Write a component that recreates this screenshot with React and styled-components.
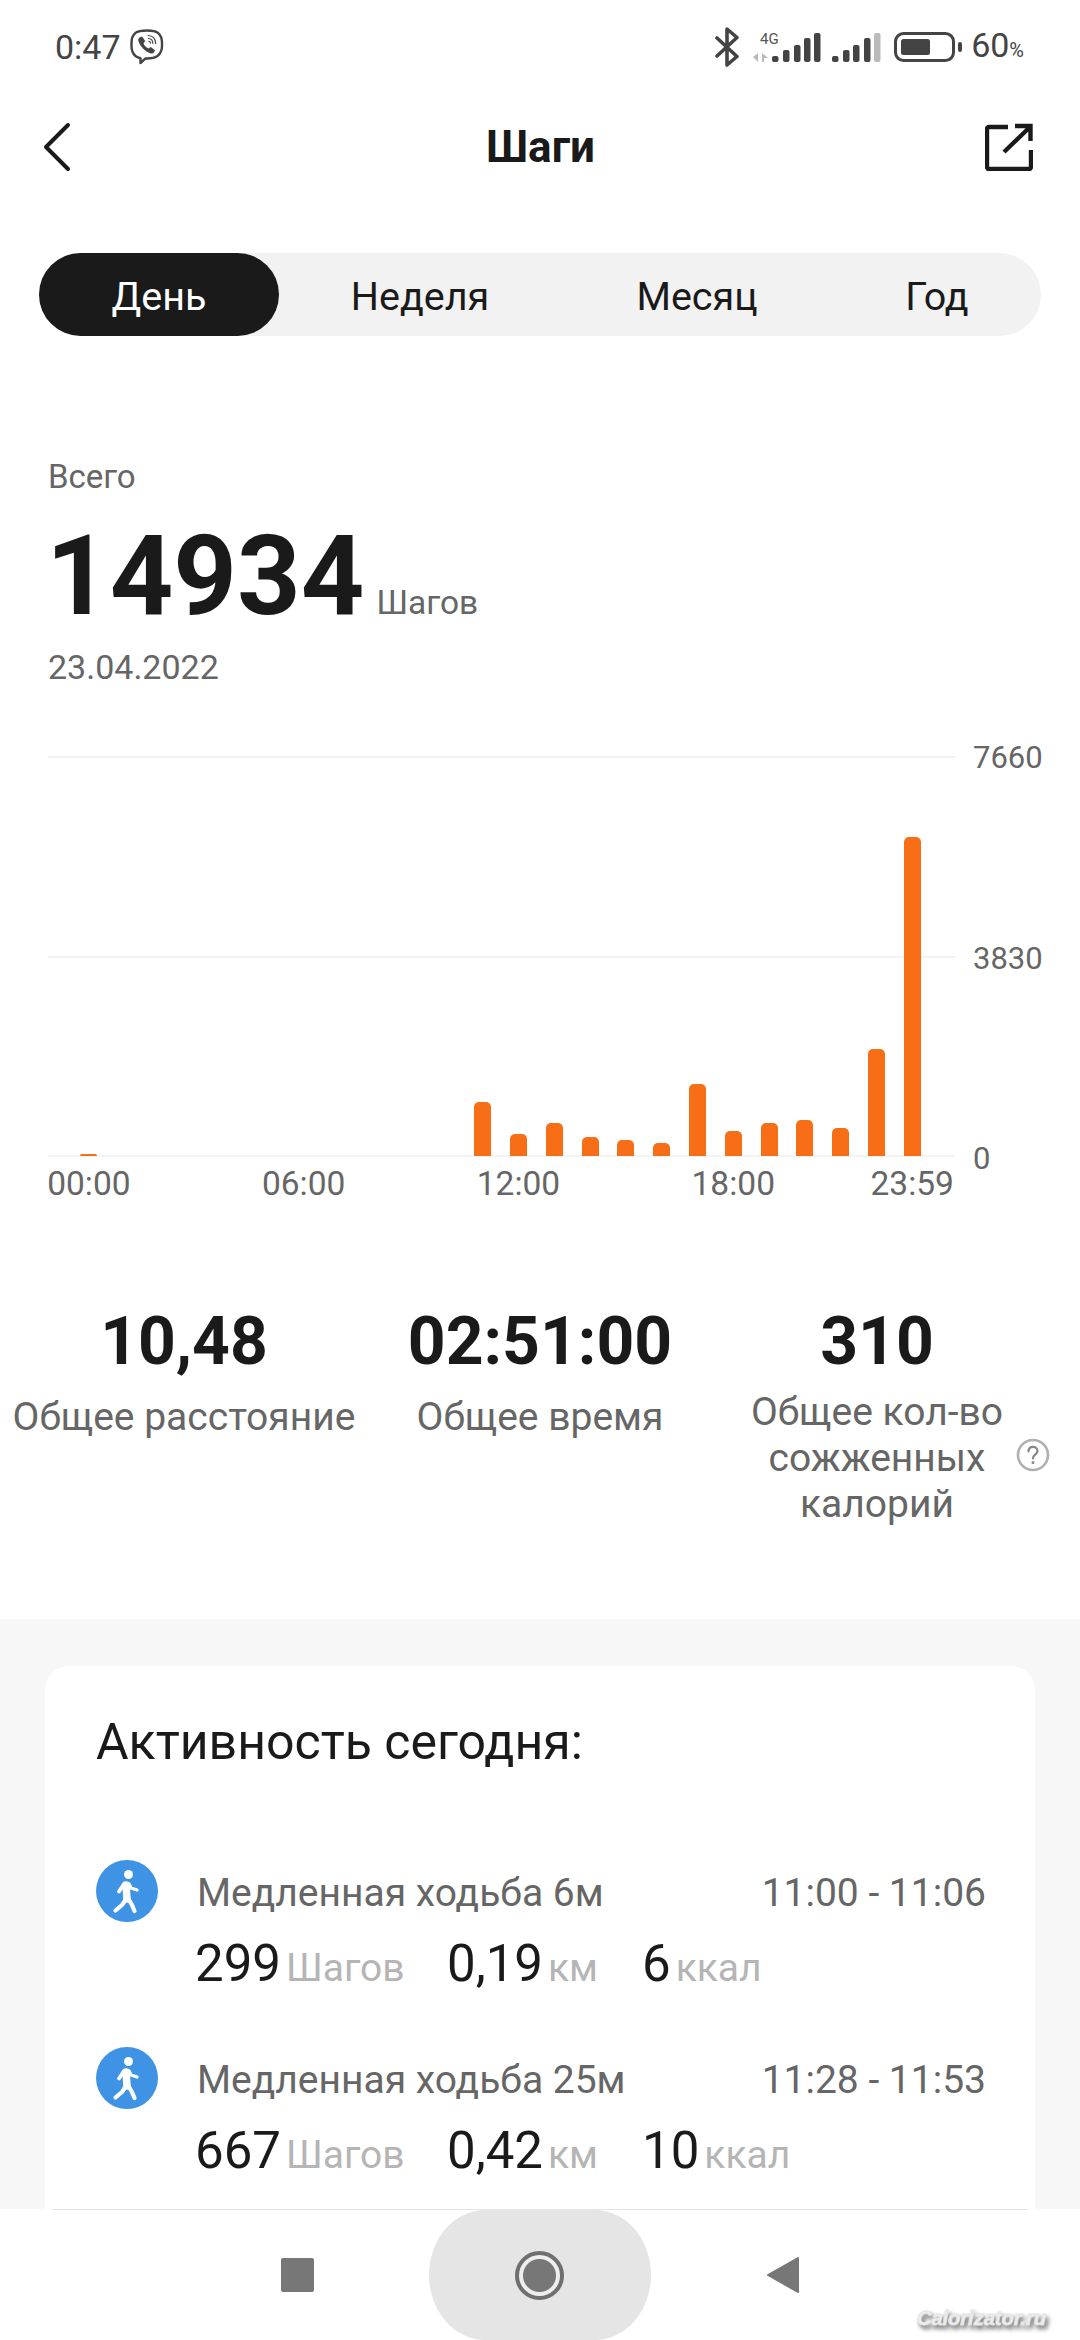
import React from "react";
import styled, { createGlobalStyle } from "styled-components";

const GlobalStyle = createGlobalStyle`
  html, body {
    margin: 0;
    padding: 0;
    background: #fff;
  }
  * {
    box-sizing: border-box;
  }
`;

const tabs = ["День", "Неделя", "Месяц", "Год"];

// steps per hour, as bar heights in px
const hours = [2, 0, 0, 0, 0, 0, 0, 0, 0, 0, 0, 54, 22, 33, 19, 16, 13, 72, 25, 33, 36, 28, 107, 319];
const hourLabels = [
  { slot: 0, text: "00:00" },
  { slot: 6, text: "06:00" },
  { slot: 12, text: "12:00" },
  { slot: 18, text: "18:00" },
  { slot: 23, text: "23:59" },
];

const activities = [
  { title: "Медленная ходьба 6м", time: "11:00 - 11:06", steps: "299", km: "0,19", kcal: "6" },
  { title: "Медленная ходьба 25м", time: "11:28 - 11:53", steps: "667", km: "0,42", kcal: "10" },
];

function ViberIcon() {
  return (
    <svg width="34" height="36" viewBox="0 0 34 36" fill="none">
      <path
        d="M17 1.500c-5 0-9 .4-11.500 2.400C3 6 1.500 9 1.500 14v3c0 5 1.500 8 4 10 1.500 1.100 3 1.800 5 2.200V34l5-4.600c5 .2 9-.4 12-2.400 2.500-2 4.500-5 4.500-10v-3c0-5-1.500-8-4-10.100C25.500 1.900 22 1.500 17 1.500z"
        stroke="#444"
        strokeWidth="2.400"
        strokeLinejoin="round"
      />
      <path
        d="M9.500 8.500l2.500-1 3.200 4.600-1.700 2.200c.8 2.300 2.700 4.300 5 5.300l2.200-1.700 4.300 3.300-1 2.300c-1 1.200-2.500 1.300-4 .7-5.500-2.300-9.500-6.300-11.500-11.800-.5-1.700-.2-3 1-3.900z"
        fill="#444"
      />
      <path d="M18 6.500c4.500.2 7.500 3.200 7.700 8M18.500 9.500c2.700.2 4.300 2 4.400 4.800M19 12.300c1 .1 1.500.7 1.600 1.800" stroke="#444" strokeWidth="1.200" strokeLinecap="round" />
    </svg>
  );
}

function BluetoothIcon() {
  return (
    <svg width="29" height="40" viewBox="0 0 29 40" fill="none">
      <path
        d="M2 11l20 18.500L12 38V2l10 8.500L2 29"
        stroke="#444"
        strokeWidth="3.600"
        strokeLinecap="round"
        strokeLinejoin="round"
      />
    </svg>
  );
}

function SignalIcon() {
  const heights = [6, 12, 17, 24, 29];
  const first = [19, 30, 41, 51, 61];
  const second = [79, 90, 100, 111, 121];
  return (
    <svg width="132" height="40" viewBox="0 0 132 40">
      <text x="7" y="17" fontFamily="Roboto, sans-serif" fontSize="15" fill="#555">4G</text>
      <polygon points="0,30 5,26 5,35" fill="#bbb" />
      <polygon points="9,26 15,31 11,31 11,35 9,35" fill="#bbb" />
      {first.map((x, i) => (
        <rect key={x} x={x} y={35 - heights[i]} width="6.500" height={heights[i]} rx="2" fill="#444" />
      ))}
      {second.map((x, i) => (
        <rect key={x} x={x} y={35 - heights[i]} width="6.500" height={heights[i]} rx="2" fill={i === 4 ? "#bbb" : "#444"} />
      ))}
    </svg>
  );
}

function BatteryIcon() {
  return (
    <svg width="68" height="30" viewBox="0 0 68 30" fill="none">
      <rect x="1.500" y="1.500" width="58" height="27" rx="8" stroke="#444" strokeWidth="3" />
      <rect x="7" y="7" width="29" height="16" rx="2.500" fill="#444" />
      <rect x="64" y="10" width="4" height="10" rx="2" fill="#444" />
    </svg>
  );
}

function BackIcon() {
  return (
    <svg width="30" height="50" viewBox="0 0 30 50" fill="none">
      <path d="M26 3L4 25l22 22" stroke="#1a1a1a" strokeWidth="4" strokeLinecap="round" strokeLinejoin="round" />
    </svg>
  );
}

function ShareIcon() {
  return (
    <svg width="48" height="48" viewBox="0 0 48 48" fill="none">
      <path d="M23 4H4a2 2 0 0 0-2 2v38a2 2 0 0 0 2 2h40a2 2 0 0 0 2-2V27" stroke="#1a1a1a" strokeWidth="4.400" strokeLinejoin="round" />
      <path d="M19 29L45 4M30 3h15.500v15" stroke="#1a1a1a" strokeWidth="4.400" />
    </svg>
  );
}

function HelpIcon() {
  return (
    <svg width="34" height="34" viewBox="0 0 34 34" fill="none">
      <circle cx="17" cy="17" r="15" stroke="#b0b0b0" strokeWidth="2.600" />
      <path d="M12.500 13.500c0-3 2-4.700 4.500-4.700s4.500 1.700 4.500 4.200c0 3.500-4.500 3.500-4.500 7.500" stroke="#888" strokeWidth="2.200" strokeLinecap="round" />
      <circle cx="17" cy="24.500" r="1.500" fill="#888" />
    </svg>
  );
}

function WalkIcon() {
  return (
    <WalkCircle>
      <svg width="62" height="62" viewBox="0 0 62 62" fill="none" stroke="#fff" strokeLinecap="round" strokeLinejoin="round">
        <circle cx="32.500" cy="14.500" r="4.500" fill="#fff" stroke="none" />
        <path d="M30 25l1 14" strokeWidth="7.500" />
        <path d="M28 24l-5 7.500" strokeWidth="3.800" />
        <path d="M33 24l2 4 6 2" strokeWidth="3.400" />
        <path d="M30 39l-4 6-6.500 5.500" strokeWidth="4.200" />
        <path d="M32.500 39l3.500 6 2.500 6" strokeWidth="4.200" />
      </svg>
    </WalkCircle>
  );
}

export default function App() {
  return (
    <Screen>
      <GlobalStyle />
      <Main>
        <StatusBar>
          <StatusLeft>
            <Clock>0:47</Clock>
            <ViberIcon />
          </StatusLeft>
          <StatusRight>
            <BluetoothIcon />
            <SignalIcon />
            <BatteryIcon />
            <BatteryText>
              60<small>%</small>
            </BatteryText>
          </StatusRight>
        </StatusBar>

        <Header>
          <BackIcon />
          <Title>Шаги</Title>
          <ShareSlot>
            <ShareIcon />
          </ShareSlot>
        </Header>

        <TabBar>
          {tabs.map((tab, i) => (
            <Tab key={tab} $active={i === 0}>
              {tab}
            </Tab>
          ))}
        </TabBar>

        <Summary>
          <SummaryLabel>Всего</SummaryLabel>
          <TotalRow>
            <Total>14934</Total>
            <TotalUnit>Шагов</TotalUnit>
          </TotalRow>
          <SummaryDate>23.04.2022</SummaryDate>
        </Summary>

        <Chart>
          <ChartBody>
            <Plot>
              <GridLines>
                <GridLine />
                <GridLine />
                <GridLine />
              </GridLines>
              <Bars>
                {hours.map((h, i) => (
                  <Bar key={i} style={{ height: h }} />
                ))}
              </Bars>
            </Plot>
            <XAxis>
              {hourLabels.map((l) => (
                <XLabel key={l.text} $slot={l.slot}>
                  {l.text}
                </XLabel>
              ))}
            </XAxis>
          </ChartBody>
          <YAxis>
            <YLabel>7660</YLabel>
            <YLabel>3830</YLabel>
            <YLabel>0</YLabel>
          </YAxis>
        </Chart>

        <Stats>
          <Stat>
            <StatValue>10,48</StatValue>
            <StatLabel>Общее расстояние</StatLabel>
          </Stat>
          <Stat>
            <StatValue>02:51:00</StatValue>
            <StatLabel>Общее время</StatLabel>
          </Stat>
          <Stat>
            <StatValue>310</StatValue>
            <StatLabel $tight>
              Общее кол-во
              <br />
              сожженных
              <br />
              калорий
            </StatLabel>
            <HelpBadge>
              <HelpIcon />
            </HelpBadge>
          </Stat>
        </Stats>

        <GraySection>
          <Card>
            <CardTitle>Активность сегодня:</CardTitle>
            <ActivityList>
              {activities.map((a) => (
                <Activity key={a.time}>
                  <WalkIcon />
                  <ActivityBody>
                    <ActivityHead>
                      <span>{a.title}</span>
                      <span>{a.time}</span>
                    </ActivityHead>
                    <ActivityStats>
                      <Metric>
                        <b>{a.steps}</b>
                        <span>Шагов</span>
                      </Metric>
                      <Metric>
                        <b>{a.km}</b>
                        <span>км</span>
                      </Metric>
                      <Metric>
                        <b>{a.kcal}</b>
                        <span>ккал</span>
                      </Metric>
                    </ActivityStats>
                  </ActivityBody>
                </Activity>
              ))}
            </ActivityList>
          </Card>
        </GraySection>
      </Main>

      <NavBar>
        <NavLine />
        <NavButtons>
          <NavSquare />
          <HomePill>
            <HomeRing />
          </HomePill>
          <svg width="34" height="38" viewBox="0 0 34 38">
            <path d="M32 2L2 19l30 17z" fill="#777" stroke="#777" strokeWidth="2" strokeLinejoin="round" />
          </svg>
        </NavButtons>
      </NavBar>
      <Watermark>Calorizator.ru</Watermark>
    </Screen>
  );
}

const Screen = styled.div`
  position: relative;
  width: 1080px;
  height: 2340px;
  display: flex;
  flex-direction: column;
  overflow: hidden;
  background: #fff;
  font-family: Roboto, "Noto Sans", sans-serif;
  color: #1a1a1a;
`;

const Main = styled.div`
  flex: 1;
  min-height: 0;
  display: flex;
  flex-direction: column;
`;

const StatusBar = styled.div`
  height: 94px;
  padding: 0 56px 0 55px;
  display: flex;
  align-items: center;
  justify-content: space-between;
  color: #444;
`;

const StatusLeft = styled.div`
  display: flex;
  align-items: center;
  gap: 9px;
`;

const Clock = styled.span`
  font-size: 34px;
  line-height: 40px;
`;

const StatusRight = styled.div`
  display: flex;
  align-items: center;
  gap: 9px;
`;

const BatteryText = styled.span`
  font-size: 34px;
  line-height: 40px;
  small {
    font-size: 20px;
  }
`;

const Header = styled.div`
  height: 106px;
  padding: 0 47px 0 42px;
  display: grid;
  grid-template-columns: 1fr auto 1fr;
  align-items: center;
`;

const ShareSlot = styled.div`
  justify-self: end;
  line-height: 0;
`;

const Title = styled.h1`
  margin: 0;
  font-size: 44px;
  font-weight: 700;
  transform: translateX(3px);
`;

const TabBar = styled.div`
  margin: 53px 39px 0;
  height: 83px;
  display: grid;
  grid-template-columns: 240px 282px 272px 1fr;
  background: #f2f2f2;
  border-radius: 42px;
`;

const Tab = styled.div`
  display: flex;
  align-items: center;
  justify-content: center;
  padding-top: 3px;
  font-size: 39.500px;
  border-radius: 42px;
  background: ${(p) => (p.$active ? "#1a1a1a" : "transparent")};
  color: ${(p) => (p.$active ? "#fff" : "#1a1a1a")};
`;

const Summary = styled.div`
  margin-top: 121px;
  padding: 0 48px;
`;

const SummaryLabel = styled.div`
  font-size: 33px;
  line-height: 40px;
  color: #666;
`;

const TotalRow = styled.div`
  margin-top: 25px;
  height: 108px;
  display: flex;
  align-items: baseline;
  gap: 12px;
`;

const Total = styled.div`
  font-size: 111px;
  line-height: 108px;
  font-weight: 700;
  margin-left: -2px;
`;

const TotalUnit = styled.div`
  font-size: 33.500px;
  color: #666;
`;

const SummaryDate = styled.div`
  margin-top: 17px;
  font-size: 34px;
  line-height: 40px;
  color: #666;
`;

const Chart = styled.div`
  margin-top: 69px;
  padding-left: 48px;
  display: flex;
  align-items: flex-start;
  gap: 18px;
`;

const ChartBody = styled.div`
  width: 907px;
`;

const Plot = styled.div`
  display: grid;
  height: 401px;
`;

const GridLines = styled.div`
  grid-area: 1 / 1;
  display: flex;
  flex-direction: column;
  justify-content: space-between;
`;

const GridLine = styled.div`
  height: 2px;
  background: #f3f3f3;
`;

const Bars = styled.div`
  grid-area: 1 / 1;
  padding-left: 23px;
  display: grid;
  grid-template-columns: repeat(24, 35.8px);
  align-items: end;
  justify-items: center;
`;

const Bar = styled.div`
  width: 17px;
  margin-bottom: 1px;
  background: #f86e17;
  border-radius: 5px 5px 0 0;
`;

const XAxis = styled.div`
  margin-top: 7px;
  padding-left: 23px;
  display: grid;
  grid-template-columns: repeat(24, 35.8px);
`;

const XLabel = styled.div`
  grid-row: 1;
  grid-column: ${(p) => p.$slot + 1};
  justify-self: center;
  white-space: nowrap;
  font-size: 33.500px;
  line-height: 40px;
  color: #666;
`;

const YAxis = styled.div`
  height: 441px;
  margin-top: -18px;
  display: flex;
  flex-direction: column;
  justify-content: space-between;
`;

const YLabel = styled.div`
  font-size: 31px;
  line-height: 40px;
  color: #666;
`;

const Stats = styled.div`
  margin-top: 105px;
  display: grid;
  grid-template-columns: 368px 344px 330px;
  height: 310px;
`;

const Stat = styled.div`
  position: relative;
  display: flex;
  flex-direction: column;
  align-items: center;
  text-align: center;
`;

const StatValue = styled.div`
  font-size: 66px;
  line-height: 66px;
  font-weight: 700;
  white-space: nowrap;
`;

const StatLabel = styled.div`
  margin-top: ${(p) => (p.$tight ? "14px" : "19px")};
  font-size: 39px;
  line-height: 46px;
  color: #666;
  white-space: nowrap;
`;

const HelpBadge = styled.div`
  position: absolute;
  left: 304px;
  top: 129px;
  line-height: 0;
`;

const GraySection = styled.div`
  flex: 1;
  min-height: 0;
  padding: 47px 45px 0;
  display: flex;
  background: #f7f7f7;
`;

const Card = styled.div`
  flex: 1;
  padding: 51px 49px 0 51px;
  background: #fff;
  border-radius: 24px 24px 0 0;
`;

const CardTitle = styled.div`
  font-size: 50px;
  line-height: 50px;
`;

const ActivityList = styled.div`
  margin-top: 93px;
  display: flex;
  flex-direction: column;
  gap: 55px;
`;

const Activity = styled.div`
  display: flex;
  gap: 39px;
`;

const WalkCircle = styled.div`
  flex: none;
  width: 62px;
  height: 62px;
  border-radius: 50%;
  background: #3f93e4;
  line-height: 0;
`;

const ActivityBody = styled.div`
  flex: 1;
  padding-top: 11px;
`;

const ActivityHead = styled.div`
  display: flex;
  justify-content: space-between;
  font-size: 39px;
  line-height: 44px;
  color: #666;
`;

const ActivityStats = styled.div`
  margin-top: 21px;
  margin-left: -2px;
  display: grid;
  grid-template-columns: 252px 195px 1fr;
`;

const Metric = styled.div`
  height: 56px;
  display: flex;
  align-items: baseline;
  gap: 5px;
  line-height: 56px;
  b {
    font-size: 51px;
    font-weight: 400;
    color: #1a1a1a;
  }
  span {
    font-size: 39px;
    color: #b5b5b5;
  }
`;

const NavBar = styled.div`
  flex: none;
  height: 131px;
  background: #fff;
`;

const NavLine = styled.div`
  height: 1px;
  margin: 0 52px;
  background: #e5e5e5;
`;

const NavButtons = styled.div`
  height: 130px;
  display: flex;
  align-items: center;
  justify-content: center;
  gap: 115px;
`;

const NavSquare = styled.div`
  width: 33px;
  height: 34px;
  border-radius: 2px;
  background: #777;
`;

const HomePill = styled.div`
  width: 222px;
  height: 130px;
  display: flex;
  align-items: center;
  justify-content: center;
  background: #e5e5e5;
  border-radius: 56px / 65px;
`;

const HomeRing = styled.div`
  width: 49px;
  height: 49px;
  border-radius: 50%;
  border: 4px solid #6f6f6f;
  background: radial-gradient(circle, #777 16px, #eee 17px);
`;

const Watermark = styled.div`
  position: absolute;
  left: 917px;
  top: 2305px;
  font-family: "Liberation Sans", sans-serif;
  font-size: 20px;
  line-height: 26px;
  font-weight: 700;
  font-style: italic;
  color: #eee;
  -webkit-text-stroke: 0.8px #e4e4e4;
  text-shadow: 2px 3px 4px #666, 3px 4px 5px #999;
  white-space: nowrap;
`;
